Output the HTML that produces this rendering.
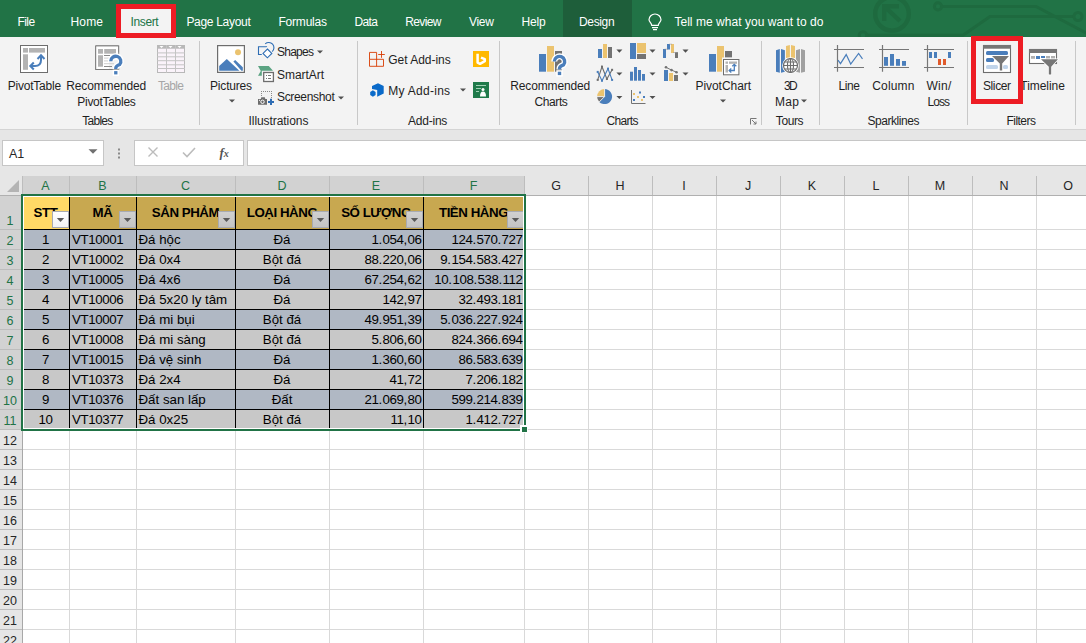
<!DOCTYPE html>
<html><head><meta charset="utf-8"><style>
html,body{margin:0;padding:0;}
body{width:1086px;height:643px;overflow:hidden;position:relative;background:#fff;font-family:"Liberation Sans",sans-serif;}
.t{position:absolute;white-space:nowrap;}
.r{position:absolute;}
.s{position:absolute;overflow:visible;}
</style></head><body>
<div class="r" style="left:0px;top:0px;width:1086px;height:37px;background:#217346;"></div>
<svg class="s" style="left:830px;top:0px" width="256" height="37" viewBox="0 0 256 37">
<g fill="none" stroke="#1e6a3f" stroke-width="3">
<circle cx="62" cy="13.8" r="16.8" stroke-width="4.4"/>
<path d="M52 6.2 H69 M54.2 4 V21 M55 7 L70 21" stroke-width="4.4"/>
<path d="M111 6.4 L206 6.4 L256 33"/>
<circle cx="108" cy="6.4" r="3.6"/>
<path d="M37 35.3 L133 35.3 L160 16.5 L244 16.5"/>
<circle cx="248" cy="16.5" r="4"/>
<circle cx="33" cy="35.5" r="3.8"/>
</g></svg>
<div class="r" style="left:563px;top:0px;width:69px;height:37px;background:#1e5e3a;"></div>
<div class="t" style="left:17.5px;top:16.04px;font-size:12px;line-height:12px;color:#ffffff;font-weight:normal;letter-spacing:-0.583px;">File</div>
<div class="t" style="left:70.5px;top:16.04px;font-size:12px;line-height:12px;color:#ffffff;font-weight:normal;letter-spacing:0.167px;">Home</div>
<div class="t" style="left:186.4px;top:16.04px;font-size:12px;line-height:12px;color:#ffffff;font-weight:normal;letter-spacing:-0.300px;">Page Layout</div>
<div class="t" style="left:278.5px;top:16.04px;font-size:12px;line-height:12px;color:#ffffff;font-weight:normal;letter-spacing:-0.214px;">Formulas</div>
<div class="t" style="left:354.6px;top:16.04px;font-size:12px;line-height:12px;color:#ffffff;font-weight:normal;letter-spacing:-0.700px;">Data</div>
<div class="t" style="left:405.2px;top:16.04px;font-size:12px;line-height:12px;color:#ffffff;font-weight:normal;letter-spacing:-0.600px;">Review</div>
<div class="t" style="left:469.0px;top:16.04px;font-size:12px;line-height:12px;color:#ffffff;font-weight:normal;letter-spacing:-0.333px;">View</div>
<div class="t" style="left:521.4px;top:16.04px;font-size:12px;line-height:12px;color:#ffffff;font-weight:normal;letter-spacing:-0.150px;">Help</div>
<div class="t" style="left:579.0px;top:16.04px;font-size:12px;line-height:12px;color:#ffffff;font-weight:normal;letter-spacing:-0.350px;">Design</div>
<div class="t" style="left:674.4px;top:16.04px;font-size:12px;line-height:12px;color:#ffffff;font-weight:normal;letter-spacing:0.037px;">Tell me what you want to do</div>
<svg class="s" style="left:646px;top:12px" width="18" height="20" viewBox="0 0 18 20"><g fill="none" stroke="#ffffff" stroke-width="1.2">
<path d="M5.7 13.3 C5.7 11 3 9.8 3 7.8 A6 5.8 0 0 1 15 7.8 C15 9.8 12.3 11 12.3 13.3 Z"/>
<path d="M6 15.6 H12 M7 17.6 H11"/></g></svg>
<div class="r" style="left:0px;top:37px;width:1086px;height:92px;background:#f3f3f3;"></div>
<div class="r" style="left:0px;top:129px;width:1086px;height:1px;background:#d4d4d4;"></div>
<div class="r" style="left:121px;top:9px;width:50px;height:30px;background:#f3f3f3;"></div>
<div class="t" style="left:130.4px;top:16.04px;font-size:12px;line-height:12px;color:#217346;font-weight:normal;letter-spacing:-0.340px;">Insert</div>
<div class="r" style="left:116px;top:4px;width:50px;height:24px;border:5px solid #ed1c24;"></div>
<div class="r" style="left:199px;top:41px;width:1px;height:84px;background:#c8c8c8;"></div>
<div class="r" style="left:357px;top:41px;width:1px;height:84px;background:#c8c8c8;"></div>
<div class="r" style="left:499px;top:41px;width:1px;height:84px;background:#c8c8c8;"></div>
<div class="r" style="left:761px;top:41px;width:1px;height:84px;background:#c8c8c8;"></div>
<div class="r" style="left:819px;top:41px;width:1px;height:84px;background:#c8c8c8;"></div>
<div class="r" style="left:967px;top:41px;width:1px;height:84px;background:#c8c8c8;"></div>
<div class="r" style="left:1075px;top:41px;width:1px;height:84px;background:#c8c8c8;"></div>
<div class="t" style="left:82.3px;top:114.84px;font-size:12px;line-height:12px;color:#1f1f1f;font-weight:normal;letter-spacing:-0.750px;">Tables</div>
<div class="t" style="left:248.5px;top:114.84px;font-size:12px;line-height:12px;color:#1f1f1f;font-weight:normal;letter-spacing:-0.062px;">Illustrations</div>
<div class="t" style="left:408.0px;top:114.84px;font-size:12px;line-height:12px;color:#1f1f1f;font-weight:normal;letter-spacing:-0.225px;">Add-ins</div>
<div class="t" style="left:606.4px;top:114.84px;font-size:12px;line-height:12px;color:#1f1f1f;font-weight:normal;letter-spacing:-0.670px;">Charts</div>
<div class="t" style="left:775.8px;top:114.84px;font-size:12px;line-height:12px;color:#1f1f1f;font-weight:normal;letter-spacing:-0.412px;">Tours</div>
<div class="t" style="left:867.5px;top:114.84px;font-size:12px;line-height:12px;color:#1f1f1f;font-weight:normal;letter-spacing:-0.456px;">Sparklines</div>
<div class="t" style="left:1006.6px;top:114.84px;font-size:12px;line-height:12px;color:#1f1f1f;font-weight:normal;letter-spacing:-0.558px;">Filters</div>
<div class="t" style="left:7.65px;top:79.84px;font-size:12px;line-height:12px;color:#1f1f1f;font-weight:normal;letter-spacing:-0.211px;">PivotTable</div>
<div class="t" style="left:66.3px;top:79.84px;font-size:12px;line-height:12px;color:#1f1f1f;font-weight:normal;letter-spacing:-0.140px;">Recommended</div>
<div class="t" style="left:77.3px;top:96.04px;font-size:12px;line-height:12px;color:#1f1f1f;font-weight:normal;letter-spacing:-0.290px;">PivotTables</div>
<div class="t" style="left:210.0px;top:79.84px;font-size:12px;line-height:12px;color:#1f1f1f;font-weight:normal;letter-spacing:-0.179px;">Pictures</div>
<div class="t" style="left:277.0px;top:46.04px;font-size:12px;line-height:12px;color:#1f1f1f;font-weight:normal;letter-spacing:-0.750px;">Shapes</div>
<div class="t" style="left:277.0px;top:68.74px;font-size:12px;line-height:12px;color:#1f1f1f;font-weight:normal;letter-spacing:-0.036px;">SmartArt</div>
<div class="t" style="left:277.0px;top:91.44px;font-size:12px;line-height:12px;color:#1f1f1f;font-weight:normal;letter-spacing:-0.328px;">Screenshot</div>
<div class="t" style="left:388.3px;top:54.24px;font-size:12px;line-height:12px;color:#1f1f1f;font-weight:normal;letter-spacing:-0.025px;">Get Add-ins</div>
<div class="t" style="left:388.3px;top:84.94px;font-size:12px;line-height:12px;color:#1f1f1f;font-weight:normal;letter-spacing:0.272px;">My Add-ins</div>
<div class="t" style="left:510.3px;top:79.84px;font-size:12px;line-height:12px;color:#1f1f1f;font-weight:normal;letter-spacing:-0.140px;">Recommended</div>
<div class="t" style="left:534.6px;top:96.04px;font-size:12px;line-height:12px;color:#1f1f1f;font-weight:normal;letter-spacing:-0.430px;">Charts</div>
<div class="t" style="left:695.5px;top:79.84px;font-size:12px;line-height:12px;color:#1f1f1f;font-weight:normal;letter-spacing:-0.056px;">PivotChart</div>
<div class="t" style="left:784.0px;top:79.84px;font-size:12px;line-height:12px;color:#1f1f1f;font-weight:normal;letter-spacing:-1.550px;">3D</div>
<div class="t" style="left:775.0px;top:96.04px;font-size:12px;line-height:12px;color:#1f1f1f;font-weight:normal;letter-spacing:0.275px;">Map</div>
<div class="t" style="left:838.4px;top:79.84px;font-size:12px;line-height:12px;color:#1f1f1f;font-weight:normal;letter-spacing:-0.383px;">Line</div>
<div class="t" style="left:872.3px;top:79.84px;font-size:12px;line-height:12px;color:#1f1f1f;font-weight:normal;letter-spacing:0.150px;">Column</div>
<div class="t" style="left:926.4px;top:79.84px;font-size:12px;line-height:12px;color:#1f1f1f;font-weight:normal;letter-spacing:0.317px;">Win/</div>
<div class="t" style="left:927.5px;top:96.04px;font-size:12px;line-height:12px;color:#1f1f1f;font-weight:normal;letter-spacing:-0.983px;">Loss</div>
<div class="t" style="left:983.0px;top:79.84px;font-size:12px;line-height:12px;color:#1f1f1f;font-weight:normal;letter-spacing:-0.400px;">Slicer</div>
<div class="t" style="left:1020.3px;top:79.84px;font-size:12px;line-height:12px;color:#1f1f1f;font-weight:normal;letter-spacing:-0.043px;">Timeline</div>
<div class="t" style="left:158.0px;top:79.84px;font-size:12px;line-height:12px;color:#a6a6a6;font-weight:normal;letter-spacing:-0.688px;">Table</div>
<svg class="s" style="left:20px;top:45px" width="28" height="28" viewBox="0 0 28 28"><rect x="0.5" y="0.5" width="27" height="27" fill="#fff" stroke="#6d6d6d"/>
<rect x="3" y="3" width="5" height="4.6" fill="#b3b3b3"/><rect x="9" y="3" width="16" height="4.6" fill="#b3b3b3"/>
<rect x="3" y="9.3" width="5" height="15.5" fill="#b3b3b3"/>
<g fill="none" stroke="#4a7ebb" stroke-width="2"><path d="M10.5 21 L15 21 Q21 21 21 15 L21 10.5"/>
<path d="M13.8 17.5 L10.3 21 L13.8 24.5"/><path d="M17.5 14 L21 10.3 L24.5 14"/></g></svg>
<svg class="s" style="left:88px;top:40px" width="40" height="40" viewBox="0 0 40 40"><path d="M7.7 29.5 V6 H30.5 V12" fill="none" stroke="#7a7a7a" stroke-width="1"/>
<path d="M7.7 6 H30.5 V20 H21 V29.5 H7.7 Z" fill="#fff"/>
<rect x="7.7" y="5.9" width="23" height="23.6" fill="none" stroke="#7a7a7a"/>
<rect x="10" y="9" width="5" height="4.7" fill="#b3b3b3"/><rect x="16.2" y="9" width="11.8" height="4.7" fill="#b3b3b3"/>
<rect x="10" y="15.2" width="5" height="11.5" fill="#b3b3b3"/>
<rect x="16" y="15" width="6" height="1" fill="#8a8a8a"/><rect x="16" y="17.6" width="8" height="1" fill="#cfcfcf"/>
<rect x="16" y="20.4" width="4" height="1" fill="#cfcfcf"/><rect x="16" y="23.2" width="10" height="1" fill="#cfcfcf"/>
<rect x="16" y="26" width="8" height="1" fill="#8a8a8a"/>
<g transform="translate(21,15.3) scale(0.97)"><path d="M1.8 6.2 A5.2 5.2 0 1 1 11 9.5 Q7 11 7 13.2 V14" fill="none" stroke="#fff" stroke-width="6"/><rect x="3.8" y="14.8" width="6.4" height="6.4" fill="#fff"/><path d="M1.8 6.2 A5.2 5.2 0 1 1 11 9.5 Q7 11 7 13.2 V14" fill="none" stroke="#4a7ebb" stroke-width="3.4"/><rect x="5.3" y="16.3" width="3.4" height="3.4" fill="#4a7ebb"/></g></svg>
<svg class="s" style="left:157px;top:45px" width="28" height="28" viewBox="0 0 28 28"><rect x="0" y="0" width="28" height="28" fill="#b8b8b8"/><rect x="1" y="3.7" width="26" height="23.3" fill="#faf3fa"/><rect x="0" y="7.4" width="28" height="1" fill="#c4c4c4"/><rect x="0" y="11.3" width="28" height="1" fill="#c4c4c4"/><rect x="0" y="15.2" width="28" height="1" fill="#c4c4c4"/><rect x="0" y="19.3" width="28" height="1" fill="#c4c4c4"/><rect x="0" y="23" width="28" height="1" fill="#c4c4c4"/><rect x="9" y="0" width="1" height="28" fill="#c4c4c4"/><rect x="18" y="0" width="1" height="28" fill="#c4c4c4"/><path d="M2.5 1 L6.5 1 L4.5 3 Z" fill="#fff"/><path d="M11.5 1 L15.5 1 L13.5 3 Z" fill="#fff"/><path d="M20.5 1 L24.5 1 L22.5 3 Z" fill="#fff"/></svg>
<svg class="s" style="left:217px;top:45px" width="28" height="28" viewBox="0 0 28 28"><rect x="0.6" y="0.6" width="26.8" height="26.8" fill="#fff" stroke="#6d6d6d" stroke-width="1.2"/>
<circle cx="21" cy="7.2" r="3" fill="#ebc36f"/>
<path d="M2.2 21 L9.8 14 L22.4 25.8 L2.2 25.8 Z" fill="#4a7ebb"/>
<path d="M16.4 16.6 L18.2 15 L25.8 22.2 L25.8 25.8 L24.4 25.8 Z" fill="#4a7ebb"/></svg>
<svg class="s" style="left:254px;top:40px" width="24" height="24" viewBox="0 0 24 24"><g fill="none" stroke="#2e6db4" stroke-width="1.1">
<path d="M12.5 7 V6.7 H4.5 V14.5 H7.8"/>
<path d="M11.2 3.8 A5 5 0 0 1 18.2 11.6"/>
<path d="M13.4 9 L17.8 13.4 L13.4 17.8 L9 13.4 Z" fill="#fff"/></g></svg>
<svg class="s" style="left:254px;top:62px" width="24" height="24" viewBox="0 0 24 24"><path d="M4 4 H14.8 L19 8.7 H7.8 V13.8 H4 L6.8 8.9 Z" fill="#5ba382"/>
<rect x="9.7" y="10.5" width="9.7" height="9" fill="#fff" stroke="#6d6d6d" stroke-width="1.3"/>
<rect x="12" y="13" width="1" height="1" fill="#777"/><rect x="14" y="13" width="3" height="1" fill="#777"/>
<rect x="12" y="16" width="1" height="1" fill="#777"/><rect x="14" y="16" width="3" height="1" fill="#777"/></svg>
<svg class="s" style="left:254px;top:86px" width="24" height="24" viewBox="0 0 24 24"><rect x="7" y="5" width="1" height="1" fill="#8a8a8a"/><rect x="9" y="5" width="1" height="1" fill="#8a8a8a"/><rect x="11" y="5" width="1" height="1" fill="#8a8a8a"/><rect x="13" y="5" width="1" height="1" fill="#8a8a8a"/><rect x="15" y="5" width="1" height="1" fill="#8a8a8a"/><rect x="17" y="5" width="1" height="1" fill="#8a8a8a"/><rect x="7" y="7" width="1" height="1" fill="#8a8a8a"/><rect x="17" y="7" width="1" height="1" fill="#8a8a8a"/><rect x="7" y="9" width="1" height="1" fill="#8a8a8a"/><rect x="17" y="9" width="1" height="1" fill="#8a8a8a"/><rect x="17" y="11" width="1" height="1" fill="#8a8a8a"/><path d="M4 13 H6.8 L7.3 11.2 H10.8 L11.3 13 H13 V18.8 H4 Z" fill="#6d6d6d"/>
<circle cx="8.5" cy="15.8" r="1.7" fill="none" stroke="#fff" stroke-width="1"/><rect x="5" y="13.8" width="1" height="1" fill="#fff"/>
<path d="M17 12.8 V19 M14 15.9 H20" stroke="#2e6db4" stroke-width="2"/></svg>
<svg class="s" style="left:366px;top:46px" width="24" height="24" viewBox="0 0 24 24"><g fill="none" stroke="#d83b01" stroke-width="0.9">
<path d="M3.5 13.3 V6.4 H10.6 V20.3 M3.5 13.3 H17.5 V20.3 H3.5 Z"/>
<path d="M12.2 8.5 H18.8 M15.5 5 V11.8"/></g></svg>
<svg class="s" style="left:366px;top:78px" width="24" height="24" viewBox="0 0 24 24"><path d="M6 8 L12 5.2 L17.7 8 V15.5 L11.2 18.7 V12 L6 11 Z" fill="#0a6ac9"/>
<path d="M6.9 12.3 L9.6 13.9 V17.1 L6.9 18.7 L4.2 17.1 V13.9 Z" fill="#0a6ac9"/></svg>
<svg class="s" style="left:473px;top:51px" width="16" height="16" viewBox="0 0 16 16"><rect width="16" height="16" fill="#ffb900"/>
<path d="M4.6 2.8 V11.6 L7 12.8 L11.8 10.1 L11.8 8.2 L8 6.6" fill="none" stroke="#fff" stroke-width="2.5" stroke-linejoin="round"/></svg>
<svg class="s" style="left:473px;top:82px" width="16" height="16" viewBox="0 0 16 16"><rect width="16" height="16" fill="#1f7a4a"/>
<rect x="3" y="3" width="10" height="1" fill="#9fd0b4"/><rect x="3" y="6" width="5" height="1" fill="#9fd0b4"/><rect x="3" y="9" width="3" height="1" fill="#9fd0b4"/>
<circle cx="10" cy="7.5" r="1.5" fill="#fff"/><path d="M7 14.5 Q7 9.5 10 9.5 Q13 9.5 13 14.5 Z" fill="#fff"/></svg>
<svg class="s" style="left:534px;top:42px" width="36" height="36" viewBox="0 0 36 36"><rect x="5" y="12" width="7" height="17.7" fill="#4a7ebb"/>
<rect x="13" y="4" width="7" height="25.7" fill="#ebc36f"/>
<rect x="21" y="9" width="7" height="20.7" fill="#737373"/><g transform="translate(18.5,13.4) scale(1.0)"><path d="M1.8 6.2 A5.2 5.2 0 1 1 11 9.5 Q7 11 7 13.2 V14" fill="none" stroke="#fff" stroke-width="6"/><rect x="3.8" y="14.8" width="6.4" height="6.4" fill="#fff"/><path d="M1.8 6.2 A5.2 5.2 0 1 1 11 9.5 Q7 11 7 13.2 V14" fill="none" stroke="#4a7ebb" stroke-width="3.4"/><rect x="5.3" y="16.3" width="3.4" height="3.4" fill="#4a7ebb"/></g></svg>
<svg class="s" style="left:594px;top:40px" width="100" height="68" viewBox="0 0 100 68">
<rect x="4" y="9" width="4" height="9" fill="#4a7ebb"/><rect x="9" y="4" width="4" height="14" fill="#ebc36f"/><rect x="14" y="7" width="4" height="11" fill="#737373"/>
<rect x="36" y="3" width="6" height="16" fill="#4a7ebb"/><rect x="43" y="3" width="9" height="10" fill="#ebc36f"/><rect x="43" y="14" width="9" height="5" fill="#737373"/>
<rect x="69" y="9" width="3" height="9" fill="#4a7ebb"/><rect x="73" y="4" width="3" height="5.5" fill="#4a7ebb"/><rect x="77" y="4" width="3" height="9" fill="#ebc36f"/><rect x="81" y="12.2" width="3" height="5.8" fill="#737373"/>
<path d="M70.5 9.2 H74 M75 4.2 H78 M79 12.5 H82" stroke="#999" stroke-width="0.6"/>
<g fill="none" stroke-width="1.1"><path d="M3.7 39.9 L8 26.7 L12.9 39 L18.1 29.8" stroke="#6d6d6d"/><path d="M3.7 31.9 L8 40.7 L14 28.7 L18.1 39.9" stroke="#4a7ebb"/></g>
<rect x="2.7" y="38.9" width="2" height="2" fill="#6d6d6d"/><rect x="7" y="25.7" width="2" height="2" fill="#6d6d6d"/><rect x="11.9" y="38" width="2" height="2" fill="#6d6d6d"/><rect x="17.1" y="28.8" width="2" height="2" fill="#6d6d6d"/>
<rect x="2.7" y="30.9" width="2" height="2" fill="#4a7ebb"/><rect x="7" y="39.7" width="2" height="2" fill="#4a7ebb"/><rect x="13" y="27.7" width="2" height="2" fill="#4a7ebb"/><rect x="17.1" y="38.9" width="2" height="2" fill="#4a7ebb"/>
<rect x="36" y="31.7" width="3" height="9" fill="#4a7ebb"/><rect x="40" y="27" width="3" height="13.7" fill="#4a7ebb"/><rect x="44" y="30" width="3" height="10.7" fill="#4a7ebb"/><rect x="48" y="34" width="3" height="6.7" fill="#4a7ebb"/>
<rect x="70" y="30" width="4" height="11" fill="#4a7ebb"/><rect x="75" y="33" width="4" height="8" fill="#ebc36f"/><rect x="80" y="35" width="4" height="6" fill="#737373"/>
<path d="M72 27.3 L77.5 30.1 L82.5 32.2" fill="none" stroke="#737373" stroke-width="1"/>
<circle cx="72" cy="27.3" r="1.3" fill="#737373"/><circle cx="77.5" cy="30.1" r="1.3" fill="#737373"/><circle cx="82.5" cy="32.2" r="1.3" fill="#737373"/>
<path d="M10.6 56.6 L10.6 49.1 A7.5 7.5 0 1 1 5.3 61.9 Z" fill="#4a7ebb"/>
<path d="M10.6 56.6 L3.1 56.6 A7.5 7.5 0 0 1 10.6 49.1 Z" fill="#ebc36f"/>
<path d="M10.6 56.6 L5.3 61.9 A7.5 7.5 0 0 1 3.1 56.6 Z" fill="#737373"/>
<path d="M10.6 48.5 V56.6 H2.5 M10.6 56.6 L4.9 62.3" stroke="#f3f3f3" stroke-width="0.9" fill="none"/>
<path d="M37.5 50 V63.5 H51.5" fill="none" stroke="#737373" stroke-width="1"/>
<rect x="39" y="53" width="2" height="2" fill="#ebc36f"/><rect x="45" y="51.5" width="2" height="2" fill="#4a7ebb"/><rect x="43" y="56" width="2" height="2" fill="#ebc36f"/>
<rect x="49" y="56" width="2" height="2" fill="#4a7ebb"/><rect x="39" y="59" width="2" height="2" fill="#4a7ebb"/><rect x="47" y="59" width="2" height="2" fill="#ebc36f"/>
<path d="M22.4 9.6 L28.4 9.6 L25.4 12.7 Z" fill="#505050"/><path d="M55.5 9.6 L61.5 9.6 L58.5 12.7 Z" fill="#505050"/><path d="M88.5 9.6 L94.5 9.6 L91.5 12.7 Z" fill="#505050"/><path d="M22.4 32.5 L28.4 32.5 L25.4 35.6 Z" fill="#505050"/><path d="M55.5 32.5 L61.5 32.5 L58.5 35.6 Z" fill="#505050"/><path d="M88.5 32.5 L94.5 32.5 L91.5 35.6 Z" fill="#505050"/><path d="M22.4 55.9 L28.4 55.9 L25.4 59.0 Z" fill="#505050"/><path d="M55.5 55.9 L61.5 55.9 L58.5 59.0 Z" fill="#505050"/></svg>
<svg class="s" style="left:705px;top:42px" width="36" height="36" viewBox="0 0 36 36"><rect x="4" y="12" width="7" height="17.7" fill="#4a7ebb"/>
<rect x="12" y="4" width="7" height="25.7" fill="#ebc36f"/>
<rect x="20" y="9" width="7" height="6.7" fill="#737373"/>
<rect x="17" y="15.5" width="19" height="18" fill="#f3f3f3"/>
<rect x="18.5" y="17.5" width="15.4" height="15.3" fill="#fff" stroke="#6d6d6d" stroke-width="1"/>
<rect x="20.5" y="19.5" width="2.5" height="2.3" fill="#b3b3b3"/><rect x="24" y="19.5" width="8" height="2.3" fill="#b3b3b3"/>
<rect x="20.5" y="23" width="2.5" height="7.5" fill="#b3b3b3"/>
<g fill="none" stroke="#4a7ebb" stroke-width="1.3"><path d="M24.2 28.5 H29.3 V22.5"/><path d="M26.3 26.6 L24.2 28.5 L26.3 30.5 M27.3 24.3 L29.3 22.3 L31.3 24.3"/></g></svg>
<svg class="s" style="left:772px;top:42px" width="36" height="36" viewBox="0 0 36 36"><path d="M4 8.3 L7.8 7 V30.8 L4 29.8 Z" fill="#4a7ebb"/><path d="M9 7 L12.9 8.3 V29.8 L9 30.8 Z" fill="#4a7ebb"/>
<path d="M14 4 L17.9 3 V16 H14 Z" fill="#ebc36f"/><path d="M19 3 L23 4 V16 H19 Z" fill="#ebc36f"/>
<path d="M24 8.3 L28 7 V30.8 L24 29.8 Z" fill="#a0a0a0"/><path d="M29 7 L33 8.3 V29.8 L29 30.8 Z" fill="#a0a0a0"/>
<circle cx="18.5" cy="23.5" r="8.3" fill="#fff"/>
<g fill="none" stroke="#6d6d6d" stroke-width="1.2"><circle cx="18.5" cy="23.5" r="7"/><ellipse cx="18.5" cy="23.5" rx="3" ry="7"/>
<path d="M11.5 23.5 H25.5 M12.5 20 H24.5 M12.5 27 H24.5 M18.5 16.5 V30.5"/></g></svg>
<svg class="s" style="left:830px;top:42px" width="36" height="36" viewBox="0 0 36 36"><path d="M7.5 3 V29.7 M4 7.5 H34 M4 25.5 H34" fill="none" stroke="#767676" stroke-width="1.2"/></svg>
<svg class="s" style="left:876px;top:42px" width="36" height="36" viewBox="0 0 36 36"><path d="M6.5 3 V29.7 M3 7.5 H33 M3 25.5 H33" fill="none" stroke="#767676" stroke-width="1.2"/></svg>
<svg class="s" style="left:921px;top:42px" width="36" height="36" viewBox="0 0 36 36"><path d="M6.5 3 V29.7 M3 7.5 H33 M3 25.5 H33" fill="none" stroke="#767676" stroke-width="1.2"/></svg>
<svg class="s" style="left:830px;top:42px" width="36" height="36" viewBox="0 0 36 36"><path d="M8 18.2 L10.5 21.6 L16.2 12.6 L20.7 22.1 L28.6 11.5 L32.5 16.8" fill="none" stroke="#4a7ebb" stroke-width="1.2"/></svg>
<svg class="s" style="left:876px;top:42px" width="36" height="36" viewBox="0 0 36 36"><rect x="8" y="15" width="4" height="8.8" fill="#4a7ebb"/><rect x="14" y="12" width="4" height="11.8" fill="#4a7ebb"/><rect x="20" y="17" width="4" height="6.8" fill="#4a7ebb"/><rect x="26" y="19" width="4" height="4.8" fill="#4a7ebb"/></svg>
<svg class="s" style="left:921px;top:42px" width="36" height="36" viewBox="0 0 36 36"><rect x="8" y="10" width="3" height="6" fill="#4a7ebb"/><rect x="13" y="10" width="3" height="6" fill="#4a7ebb"/><rect x="27" y="10" width="3" height="6" fill="#4a7ebb"/><rect x="17" y="17" width="3" height="6" fill="#e05a2b"/><rect x="22" y="17" width="3" height="6" fill="#e05a2b"/></svg>
<svg class="s" style="left:978px;top:40px" width="40" height="40" viewBox="0 0 40 40"><rect x="5.5" y="5.5" width="27" height="27" fill="#fff" stroke="#6d6d6d" stroke-width="1.1"/>
<rect x="5" y="5" width="28" height="3.7" fill="#767676"/>
<rect x="8" y="11" width="22" height="4" rx="1.5" fill="#4a7ebb"/><rect x="8" y="18" width="8" height="4" rx="1.5" fill="#4a7ebb"/>
<rect x="8" y="25" width="12" height="4" rx="1.5" fill="#c0d4ea"/><rect x="25" y="25" width="5" height="4" rx="1.5" fill="#c0d4ea"/>
<path d="M14 16 H31 L24.2 23.5 V30.5 H21.8 V23.5 Z" fill="#767676" stroke="#fff" stroke-width="1.6" paint-order="stroke" stroke-linejoin="round"/></svg>
<svg class="s" style="left:1024px;top:40px" width="40" height="40" viewBox="0 0 40 40"><rect x="5.5" y="9.5" width="27" height="14" fill="#fff" stroke="#6d6d6d" stroke-width="1.1"/>
<rect x="5" y="9" width="28" height="4" fill="#767676"/>
<rect x="7" y="16" width="4" height="2.8" fill="#b0b0b0"/><rect x="12" y="16" width="4" height="3" fill="#4a7ebb"/><rect x="17" y="16" width="4" height="2" fill="#4a7ebb"/>
<rect x="22" y="16" width="4" height="2.8" fill="#b0b0b0"/><rect x="27" y="16" width="4" height="2.8" fill="#b0b0b0"/>
<path d="M17 19.3 H34 L27.2 26.7 V34.5 H24.8 V26.7 Z" fill="#767676" stroke="#fff" stroke-width="1.6" paint-order="stroke" stroke-linejoin="round"/></svg>
<svg class="s" style="left:227.5px;top:98px" width="8" height="6" viewBox="0 0 8 6"><path d="M1 1.5 L7 1.5 L4 4.6 Z" fill="#505050"/></svg>
<svg class="s" style="left:315.5px;top:48.6px" width="8" height="6" viewBox="0 0 8 6"><path d="M1 1.5 L7 1.5 L4 4.6 Z" fill="#505050"/></svg>
<svg class="s" style="left:336.6px;top:94.5px" width="8" height="6" viewBox="0 0 8 6"><path d="M1 1.5 L7 1.5 L4 4.6 Z" fill="#505050"/></svg>
<svg class="s" style="left:458.5px;top:87.4px" width="8" height="6" viewBox="0 0 8 6"><path d="M1 1.5 L7 1.5 L4 4.6 Z" fill="#505050"/></svg>
<svg class="s" style="left:719.3px;top:97.8px" width="8" height="6" viewBox="0 0 8 6"><path d="M1 1.5 L7 1.5 L4 4.6 Z" fill="#505050"/></svg>
<svg class="s" style="left:800.3px;top:97.8px" width="8" height="6" viewBox="0 0 8 6"><path d="M1 1.5 L7 1.5 L4 4.6 Z" fill="#505050"/></svg>
<svg class="s" style="left:750px;top:118px" width="8" height="7" viewBox="0 0 8 7"><path d="M0.5 6.5 V0.5 H6.5" fill="none" stroke="#777" stroke-width="1"/><path d="M2 2 L6 6 M6 3.5 V6 H3.5" fill="none" stroke="#777" stroke-width="1"/></svg>
<div class="r" style="left:971px;top:36px;width:42px;height:58px;border:5px solid #ed1c24;"></div>
<div class="r" style="left:0px;top:130px;width:1086px;height:46px;background:#e6e6e6;"></div>
<div class="r" style="left:2px;top:140px;width:100px;height:24px;background:#fff;border:1px solid #c6c6c6;"></div>
<div class="t" style="left:9px;top:147.92px;font-size:12.5px;line-height:12.5px;color:#262626;font-weight:normal;">A1</div>
<div class="r" style="left:134px;top:140px;width:108px;height:24px;background:#fff;border:1px solid #c6c6c6;"></div>
<div class="r" style="left:247px;top:140px;width:850px;height:24px;background:#fff;border:1px solid #c6c6c6;"></div>
<svg class="s" style="left:112px;top:145px" width="14" height="16" viewBox="0 0 14 16"><rect x="6" y="3.5" width="2" height="2" fill="#8a8a8a"/><rect x="6" y="7.5" width="2" height="2" fill="#8a8a8a"/><rect x="6" y="11.5" width="2" height="2" fill="#8a8a8a"/></svg>
<svg class="s" style="left:87px;top:147px" width="12" height="10" viewBox="0 0 12 10"><path d="M1.5 2.3 L10.5 2.3 L6 6.8 Z" fill="#707070"/></svg>
<svg class="s" style="left:146px;top:145px" width="14" height="14" viewBox="0 0 14 14"><path d="M2.5 2.5 L11.5 11.5 M11.5 2.5 L2.5 11.5" stroke="#bcbcbc" stroke-width="1.4"/></svg>
<svg class="s" style="left:181px;top:145px" width="16" height="14" viewBox="0 0 16 14"><path d="M2 7.5 L6 11.5 L14 3" fill="none" stroke="#bcbcbc" stroke-width="1.6"/></svg>
<div class="t" style="left:219.5px;top:146.00px;font-size:13px;line-height:13px;color:#555;font-weight:bold;font-family:\"Liberation Serif\",serif;"><i>f</i><span style="font-size:10px"><i>x</i></span></div>
<div class="r" style="left:0px;top:176px;width:1086px;height:19px;background:#e6e6e6;"></div>
<div class="r" style="left:22px;top:176px;width:502px;height:19px;background:#d2d2d2;"></div>
<div class="r" style="left:0px;top:195px;width:22px;height:448px;background:#e6e6e6;"></div>
<div class="r" style="left:0px;top:195px;width:22px;height:234px;background:#d2d2d2;"></div>
<div class="r" style="left:22px;top:195px;width:1064px;height:448px;background:#ffffff;"></div>
<div class="r" style="left:69px;top:195px;width:1px;height:448px;background:#d9d9d9;"></div>
<div class="r" style="left:136px;top:195px;width:1px;height:448px;background:#d9d9d9;"></div>
<div class="r" style="left:235px;top:195px;width:1px;height:448px;background:#d9d9d9;"></div>
<div class="r" style="left:329px;top:195px;width:1px;height:448px;background:#d9d9d9;"></div>
<div class="r" style="left:423px;top:195px;width:1px;height:448px;background:#d9d9d9;"></div>
<div class="r" style="left:524px;top:195px;width:1px;height:448px;background:#d9d9d9;"></div>
<div class="r" style="left:588px;top:195px;width:1px;height:448px;background:#d9d9d9;"></div>
<div class="r" style="left:652px;top:195px;width:1px;height:448px;background:#d9d9d9;"></div>
<div class="r" style="left:716px;top:195px;width:1px;height:448px;background:#d9d9d9;"></div>
<div class="r" style="left:780px;top:195px;width:1px;height:448px;background:#d9d9d9;"></div>
<div class="r" style="left:844px;top:195px;width:1px;height:448px;background:#d9d9d9;"></div>
<div class="r" style="left:908px;top:195px;width:1px;height:448px;background:#d9d9d9;"></div>
<div class="r" style="left:972px;top:195px;width:1px;height:448px;background:#d9d9d9;"></div>
<div class="r" style="left:1036px;top:195px;width:1px;height:448px;background:#d9d9d9;"></div>
<div class="r" style="left:22px;top:229px;width:1064px;height:1px;background:#d9d9d9;"></div>
<div class="r" style="left:22px;top:249px;width:1064px;height:1px;background:#d9d9d9;"></div>
<div class="r" style="left:22px;top:269px;width:1064px;height:1px;background:#d9d9d9;"></div>
<div class="r" style="left:22px;top:289px;width:1064px;height:1px;background:#d9d9d9;"></div>
<div class="r" style="left:22px;top:309px;width:1064px;height:1px;background:#d9d9d9;"></div>
<div class="r" style="left:22px;top:329px;width:1064px;height:1px;background:#d9d9d9;"></div>
<div class="r" style="left:22px;top:349px;width:1064px;height:1px;background:#d9d9d9;"></div>
<div class="r" style="left:22px;top:369px;width:1064px;height:1px;background:#d9d9d9;"></div>
<div class="r" style="left:22px;top:389px;width:1064px;height:1px;background:#d9d9d9;"></div>
<div class="r" style="left:22px;top:409px;width:1064px;height:1px;background:#d9d9d9;"></div>
<div class="r" style="left:22px;top:429px;width:1064px;height:1px;background:#d9d9d9;"></div>
<div class="r" style="left:22px;top:449px;width:1064px;height:1px;background:#d9d9d9;"></div>
<div class="r" style="left:22px;top:469px;width:1064px;height:1px;background:#d9d9d9;"></div>
<div class="r" style="left:22px;top:489px;width:1064px;height:1px;background:#d9d9d9;"></div>
<div class="r" style="left:22px;top:509px;width:1064px;height:1px;background:#d9d9d9;"></div>
<div class="r" style="left:22px;top:529px;width:1064px;height:1px;background:#d9d9d9;"></div>
<div class="r" style="left:22px;top:549px;width:1064px;height:1px;background:#d9d9d9;"></div>
<div class="r" style="left:22px;top:569px;width:1064px;height:1px;background:#d9d9d9;"></div>
<div class="r" style="left:22px;top:589px;width:1064px;height:1px;background:#d9d9d9;"></div>
<div class="r" style="left:22px;top:609px;width:1064px;height:1px;background:#d9d9d9;"></div>
<div class="r" style="left:22px;top:629px;width:1064px;height:1px;background:#d9d9d9;"></div>
<div class="r" style="left:22px;top:649px;width:1064px;height:1px;background:#d9d9d9;"></div>
<div class="r" style="left:69px;top:176px;width:1px;height:19px;background:#bdbdbd;"></div>
<div class="r" style="left:136px;top:176px;width:1px;height:19px;background:#bdbdbd;"></div>
<div class="r" style="left:235px;top:176px;width:1px;height:19px;background:#bdbdbd;"></div>
<div class="r" style="left:329px;top:176px;width:1px;height:19px;background:#bdbdbd;"></div>
<div class="r" style="left:423px;top:176px;width:1px;height:19px;background:#bdbdbd;"></div>
<div class="r" style="left:524px;top:176px;width:1px;height:19px;background:#bdbdbd;"></div>
<div class="r" style="left:588px;top:176px;width:1px;height:19px;background:#bdbdbd;"></div>
<div class="r" style="left:652px;top:176px;width:1px;height:19px;background:#bdbdbd;"></div>
<div class="r" style="left:716px;top:176px;width:1px;height:19px;background:#bdbdbd;"></div>
<div class="r" style="left:780px;top:176px;width:1px;height:19px;background:#bdbdbd;"></div>
<div class="r" style="left:844px;top:176px;width:1px;height:19px;background:#bdbdbd;"></div>
<div class="r" style="left:908px;top:176px;width:1px;height:19px;background:#bdbdbd;"></div>
<div class="r" style="left:972px;top:176px;width:1px;height:19px;background:#bdbdbd;"></div>
<div class="r" style="left:1036px;top:176px;width:1px;height:19px;background:#bdbdbd;"></div>
<div class="r" style="left:22px;top:176px;width:1px;height:19px;background:#bdbdbd;"></div>
<div class="r" style="left:0px;top:195px;width:1086px;height:1px;background:#b0b0b0;"></div>
<div class="r" style="left:22px;top:195px;width:1px;height:448px;background:#a8a8a8;"></div>
<div class="r" style="left:0px;top:229px;width:22px;height:1px;background:#bdbdbd;"></div>
<div class="r" style="left:0px;top:249px;width:22px;height:1px;background:#bdbdbd;"></div>
<div class="r" style="left:0px;top:269px;width:22px;height:1px;background:#bdbdbd;"></div>
<div class="r" style="left:0px;top:289px;width:22px;height:1px;background:#bdbdbd;"></div>
<div class="r" style="left:0px;top:309px;width:22px;height:1px;background:#bdbdbd;"></div>
<div class="r" style="left:0px;top:329px;width:22px;height:1px;background:#bdbdbd;"></div>
<div class="r" style="left:0px;top:349px;width:22px;height:1px;background:#bdbdbd;"></div>
<div class="r" style="left:0px;top:369px;width:22px;height:1px;background:#bdbdbd;"></div>
<div class="r" style="left:0px;top:389px;width:22px;height:1px;background:#bdbdbd;"></div>
<div class="r" style="left:0px;top:409px;width:22px;height:1px;background:#bdbdbd;"></div>
<div class="r" style="left:0px;top:429px;width:22px;height:1px;background:#bdbdbd;"></div>
<div class="r" style="left:0px;top:449px;width:22px;height:1px;background:#bdbdbd;"></div>
<div class="r" style="left:0px;top:469px;width:22px;height:1px;background:#bdbdbd;"></div>
<div class="r" style="left:0px;top:489px;width:22px;height:1px;background:#bdbdbd;"></div>
<div class="r" style="left:0px;top:509px;width:22px;height:1px;background:#bdbdbd;"></div>
<div class="r" style="left:0px;top:529px;width:22px;height:1px;background:#bdbdbd;"></div>
<div class="r" style="left:0px;top:549px;width:22px;height:1px;background:#bdbdbd;"></div>
<div class="r" style="left:0px;top:569px;width:22px;height:1px;background:#bdbdbd;"></div>
<div class="r" style="left:0px;top:589px;width:22px;height:1px;background:#bdbdbd;"></div>
<div class="r" style="left:0px;top:609px;width:22px;height:1px;background:#bdbdbd;"></div>
<div class="r" style="left:0px;top:629px;width:22px;height:1px;background:#bdbdbd;"></div>
<div class="r" style="left:0px;top:649px;width:22px;height:1px;background:#bdbdbd;"></div>
<div class="t" style="left:15.5px;width:60px;text-align:center;top:180.42px;font-size:12.5px;line-height:12.5px;color:#217346;font-weight:normal;">A</div>
<div class="t" style="left:72.5px;width:60px;text-align:center;top:180.42px;font-size:12.5px;line-height:12.5px;color:#217346;font-weight:normal;">B</div>
<div class="t" style="left:155.5px;width:60px;text-align:center;top:180.42px;font-size:12.5px;line-height:12.5px;color:#217346;font-weight:normal;">C</div>
<div class="t" style="left:252.0px;width:60px;text-align:center;top:180.42px;font-size:12.5px;line-height:12.5px;color:#217346;font-weight:normal;">D</div>
<div class="t" style="left:346.0px;width:60px;text-align:center;top:180.42px;font-size:12.5px;line-height:12.5px;color:#217346;font-weight:normal;">E</div>
<div class="t" style="left:443.5px;width:60px;text-align:center;top:180.42px;font-size:12.5px;line-height:12.5px;color:#217346;font-weight:normal;">F</div>
<div class="t" style="left:526.0px;width:60px;text-align:center;top:180.42px;font-size:12.5px;line-height:12.5px;color:#262626;font-weight:normal;">G</div>
<div class="t" style="left:590.0px;width:60px;text-align:center;top:180.42px;font-size:12.5px;line-height:12.5px;color:#262626;font-weight:normal;">H</div>
<div class="t" style="left:654.0px;width:60px;text-align:center;top:180.42px;font-size:12.5px;line-height:12.5px;color:#262626;font-weight:normal;">I</div>
<div class="t" style="left:718.0px;width:60px;text-align:center;top:180.42px;font-size:12.5px;line-height:12.5px;color:#262626;font-weight:normal;">J</div>
<div class="t" style="left:782.0px;width:60px;text-align:center;top:180.42px;font-size:12.5px;line-height:12.5px;color:#262626;font-weight:normal;">K</div>
<div class="t" style="left:846.0px;width:60px;text-align:center;top:180.42px;font-size:12.5px;line-height:12.5px;color:#262626;font-weight:normal;">L</div>
<div class="t" style="left:910.0px;width:60px;text-align:center;top:180.42px;font-size:12.5px;line-height:12.5px;color:#262626;font-weight:normal;">M</div>
<div class="t" style="left:974.0px;width:60px;text-align:center;top:180.42px;font-size:12.5px;line-height:12.5px;color:#262626;font-weight:normal;">N</div>
<div class="t" style="left:1038.0px;width:60px;text-align:center;top:180.42px;font-size:12.5px;line-height:12.5px;color:#262626;font-weight:normal;">O</div>
<div class="t" style="left:-1.0px;width:22px;text-align:center;top:215.42px;font-size:12.5px;line-height:12.5px;color:#217346;font-weight:normal;">1</div>
<div class="t" style="left:-1.0px;width:22px;text-align:center;top:235.02px;font-size:12.5px;line-height:12.5px;color:#217346;font-weight:normal;">2</div>
<div class="t" style="left:-1.0px;width:22px;text-align:center;top:255.02px;font-size:12.5px;line-height:12.5px;color:#217346;font-weight:normal;">3</div>
<div class="t" style="left:-1.0px;width:22px;text-align:center;top:275.02px;font-size:12.5px;line-height:12.5px;color:#217346;font-weight:normal;">4</div>
<div class="t" style="left:-1.0px;width:22px;text-align:center;top:295.02px;font-size:12.5px;line-height:12.5px;color:#217346;font-weight:normal;">5</div>
<div class="t" style="left:-1.0px;width:22px;text-align:center;top:315.02px;font-size:12.5px;line-height:12.5px;color:#217346;font-weight:normal;">6</div>
<div class="t" style="left:-1.0px;width:22px;text-align:center;top:335.02px;font-size:12.5px;line-height:12.5px;color:#217346;font-weight:normal;">7</div>
<div class="t" style="left:-1.0px;width:22px;text-align:center;top:355.02px;font-size:12.5px;line-height:12.5px;color:#217346;font-weight:normal;">8</div>
<div class="t" style="left:-1.0px;width:22px;text-align:center;top:375.02px;font-size:12.5px;line-height:12.5px;color:#217346;font-weight:normal;">9</div>
<div class="t" style="left:-1.0px;width:22px;text-align:center;top:395.02px;font-size:12.5px;line-height:12.5px;color:#217346;font-weight:normal;">10</div>
<div class="t" style="left:-1.0px;width:22px;text-align:center;top:415.02px;font-size:12.5px;line-height:12.5px;color:#217346;font-weight:normal;">11</div>
<div class="t" style="left:-1.0px;width:22px;text-align:center;top:435.02px;font-size:12.5px;line-height:12.5px;color:#262626;font-weight:normal;">12</div>
<div class="t" style="left:-1.0px;width:22px;text-align:center;top:455.02px;font-size:12.5px;line-height:12.5px;color:#262626;font-weight:normal;">13</div>
<div class="t" style="left:-1.0px;width:22px;text-align:center;top:475.02px;font-size:12.5px;line-height:12.5px;color:#262626;font-weight:normal;">14</div>
<div class="t" style="left:-1.0px;width:22px;text-align:center;top:495.02px;font-size:12.5px;line-height:12.5px;color:#262626;font-weight:normal;">15</div>
<div class="t" style="left:-1.0px;width:22px;text-align:center;top:515.02px;font-size:12.5px;line-height:12.5px;color:#262626;font-weight:normal;">16</div>
<div class="t" style="left:-1.0px;width:22px;text-align:center;top:535.02px;font-size:12.5px;line-height:12.5px;color:#262626;font-weight:normal;">17</div>
<div class="t" style="left:-1.0px;width:22px;text-align:center;top:555.02px;font-size:12.5px;line-height:12.5px;color:#262626;font-weight:normal;">18</div>
<div class="t" style="left:-1.0px;width:22px;text-align:center;top:575.02px;font-size:12.5px;line-height:12.5px;color:#262626;font-weight:normal;">19</div>
<div class="t" style="left:-1.0px;width:22px;text-align:center;top:595.02px;font-size:12.5px;line-height:12.5px;color:#262626;font-weight:normal;">20</div>
<div class="t" style="left:-1.0px;width:22px;text-align:center;top:615.02px;font-size:12.5px;line-height:12.5px;color:#262626;font-weight:normal;">21</div>
<div class="t" style="left:-1.0px;width:22px;text-align:center;top:635.02px;font-size:12.5px;line-height:12.5px;color:#262626;font-weight:normal;">22</div>
<svg class="s" style="left:0px;top:176px" width="22" height="19" viewBox="0 0 22 19"><path d="M7 16 L19 16 L19 4 Z" fill="#b4b4b4"/></svg>
<div class="r" style="left:23px;top:196px;width:501px;height:233px;background:#ffffff;"></div>
<div class="r" style="left:24px;top:197px;width:499px;height:32px;background:#c8a850;"></div>
<div class="r" style="left:24px;top:197px;width:45px;height:32px;background:#ffd966;"></div>
<div class="r" style="left:24px;top:230px;width:499px;height:19px;background:#b0b8c4;"></div>
<div class="r" style="left:24px;top:250px;width:499px;height:19px;background:#c8c8c8;"></div>
<div class="r" style="left:24px;top:270px;width:499px;height:19px;background:#b0b8c4;"></div>
<div class="r" style="left:24px;top:290px;width:499px;height:19px;background:#c8c8c8;"></div>
<div class="r" style="left:24px;top:310px;width:499px;height:19px;background:#b0b8c4;"></div>
<div class="r" style="left:24px;top:330px;width:499px;height:19px;background:#c8c8c8;"></div>
<div class="r" style="left:24px;top:350px;width:499px;height:19px;background:#b0b8c4;"></div>
<div class="r" style="left:24px;top:370px;width:499px;height:19px;background:#c8c8c8;"></div>
<div class="r" style="left:24px;top:390px;width:499px;height:19px;background:#b0b8c4;"></div>
<div class="r" style="left:24px;top:410px;width:499px;height:18px;background:#c8c8c8;"></div>
<div class="r" style="left:69px;top:197px;width:1px;height:231px;background:#000;"></div>
<div class="r" style="left:136px;top:197px;width:1px;height:231px;background:#000;"></div>
<div class="r" style="left:235px;top:197px;width:1px;height:231px;background:#000;"></div>
<div class="r" style="left:329px;top:197px;width:1px;height:231px;background:#000;"></div>
<div class="r" style="left:423px;top:197px;width:1px;height:231px;background:#000;"></div>
<div class="r" style="left:24px;top:229px;width:499px;height:1px;background:#000;"></div>
<div class="r" style="left:24px;top:249px;width:499px;height:1px;background:#000;"></div>
<div class="r" style="left:24px;top:269px;width:499px;height:1px;background:#000;"></div>
<div class="r" style="left:24px;top:289px;width:499px;height:1px;background:#000;"></div>
<div class="r" style="left:24px;top:309px;width:499px;height:1px;background:#000;"></div>
<div class="r" style="left:24px;top:329px;width:499px;height:1px;background:#000;"></div>
<div class="r" style="left:24px;top:349px;width:499px;height:1px;background:#000;"></div>
<div class="r" style="left:24px;top:369px;width:499px;height:1px;background:#000;"></div>
<div class="r" style="left:24px;top:389px;width:499px;height:1px;background:#000;"></div>
<div class="r" style="left:24px;top:409px;width:499px;height:1px;background:#000;"></div>
<div class="r" style="left:21px;top:194px;width:501px;height:233px;border:2px solid #217346;"></div>
<div class="r" style="left:520px;top:425px;width:8px;height:8px;background:#ffffff;"></div>
<div class="r" style="left:522px;top:427px;width:5px;height:5px;background:#217346;"></div>
<div class="t" style="left:-14.5px;width:120px;text-align:center;top:205.74px;font-size:13.3px;line-height:13.3px;color:#000;font-weight:bold;letter-spacing:-0.45px;">STT</div>
<div class="t" style="left:42.5px;width:120px;text-align:center;top:205.74px;font-size:13.3px;line-height:13.3px;color:#000;font-weight:bold;letter-spacing:-0.45px;">MÃ</div>
<div class="t" style="left:125.5px;width:120px;text-align:center;top:205.74px;font-size:13.3px;line-height:13.3px;color:#000;font-weight:bold;letter-spacing:-0.45px;">SẢN PHẢM</div>
<div class="t" style="left:222.0px;width:120px;text-align:center;top:205.74px;font-size:13.3px;line-height:13.3px;color:#000;font-weight:bold;letter-spacing:-0.45px;">LOẠI HÀNG</div>
<div class="t" style="left:316.0px;width:120px;text-align:center;top:205.74px;font-size:13.3px;line-height:13.3px;color:#000;font-weight:bold;letter-spacing:-0.45px;">SỐ LƯỢNG</div>
<div class="t" style="left:413.5px;width:120px;text-align:center;top:205.74px;font-size:13.3px;line-height:13.3px;color:#000;font-weight:bold;letter-spacing:-0.45px;">TIỀN HÀNG</div>
<div class="r" style="left:52px;top:211px;width:15px;height:15px;background:linear-gradient(#ffffff,#f2f2f2);border:1px solid #a8abb2;"></div>
<svg class="s" style="left:52px;top:211px" width="17" height="17" viewBox="0 0 17 17"><path d="M4.8 7 L12.2 7 L8.5 11 Z" fill="#595959"/></svg>
<div class="r" style="left:119px;top:211px;width:15px;height:15px;background:linear-gradient(#d0d0d0,#c4c4c4);border:1px solid #a8abb2;"></div>
<svg class="s" style="left:119px;top:211px" width="17" height="17" viewBox="0 0 17 17"><path d="M4.8 7 L12.2 7 L8.5 11 Z" fill="#595959"/></svg>
<div class="r" style="left:218px;top:211px;width:15px;height:15px;background:linear-gradient(#d0d0d0,#c4c4c4);border:1px solid #a8abb2;"></div>
<svg class="s" style="left:218px;top:211px" width="17" height="17" viewBox="0 0 17 17"><path d="M4.8 7 L12.2 7 L8.5 11 Z" fill="#595959"/></svg>
<div class="r" style="left:312px;top:211px;width:15px;height:15px;background:linear-gradient(#d0d0d0,#c4c4c4);border:1px solid #a8abb2;"></div>
<svg class="s" style="left:312px;top:211px" width="17" height="17" viewBox="0 0 17 17"><path d="M4.8 7 L12.2 7 L8.5 11 Z" fill="#595959"/></svg>
<div class="r" style="left:406px;top:211px;width:15px;height:15px;background:linear-gradient(#d0d0d0,#c4c4c4);border:1px solid #a8abb2;"></div>
<svg class="s" style="left:406px;top:211px" width="17" height="17" viewBox="0 0 17 17"><path d="M4.8 7 L12.2 7 L8.5 11 Z" fill="#595959"/></svg>
<div class="r" style="left:507px;top:211px;width:15px;height:15px;background:linear-gradient(#d0d0d0,#c4c4c4);border:1px solid #a8abb2;border-right:none;"></div>
<svg class="s" style="left:507px;top:211px" width="17" height="17" viewBox="0 0 17 17"><path d="M4.8 7 L12.2 7 L8.5 11 Z" fill="#595959"/></svg>
<div class="t" style="left:25.5px;width:40px;text-align:center;top:232.94px;font-size:13.3px;line-height:13.3px;color:#000;font-weight:normal;letter-spacing:-0.4px;">1</div>
<div class="t" style="left:72px;top:232.94px;font-size:13.3px;line-height:13.3px;color:#000;font-weight:normal;letter-spacing:-0.4px;">VT10001</div>
<div class="t" style="left:138.5px;top:232.94px;font-size:13.3px;line-height:13.3px;color:#000;font-weight:normal;letter-spacing:0px;">Đá hộc</div>
<div class="t" style="left:242.0px;width:80px;text-align:center;top:232.94px;font-size:13.3px;line-height:13.3px;color:#000;font-weight:normal;letter-spacing:0px;">Đá</div>
<div class="t" style="left:331.5px;width:90px;text-align:right;top:232.94px;font-size:13.3px;line-height:13.3px;color:#000;font-weight:normal;letter-spacing:-0.4px;">1<span style="letter-spacing:0.35px">.</span>054<span style="letter-spacing:0.35px">,</span>06</div>
<div class="t" style="left:422.5px;width:100px;text-align:right;top:232.94px;font-size:13.3px;line-height:13.3px;color:#000;font-weight:normal;letter-spacing:-0.4px;">124<span style="letter-spacing:0.35px">.</span>570<span style="letter-spacing:0.35px">.</span>727</div>
<div class="t" style="left:25.5px;width:40px;text-align:center;top:252.94px;font-size:13.3px;line-height:13.3px;color:#000;font-weight:normal;letter-spacing:-0.4px;">2</div>
<div class="t" style="left:72px;top:252.94px;font-size:13.3px;line-height:13.3px;color:#000;font-weight:normal;letter-spacing:-0.4px;">VT10002</div>
<div class="t" style="left:138.5px;top:252.94px;font-size:13.3px;line-height:13.3px;color:#000;font-weight:normal;letter-spacing:0px;">Đá 0x4</div>
<div class="t" style="left:242.0px;width:80px;text-align:center;top:252.94px;font-size:13.3px;line-height:13.3px;color:#000;font-weight:normal;letter-spacing:0px;">Bột đá</div>
<div class="t" style="left:331.5px;width:90px;text-align:right;top:252.94px;font-size:13.3px;line-height:13.3px;color:#000;font-weight:normal;letter-spacing:-0.4px;">88<span style="letter-spacing:0.35px">.</span>220<span style="letter-spacing:0.35px">,</span>06</div>
<div class="t" style="left:422.5px;width:100px;text-align:right;top:252.94px;font-size:13.3px;line-height:13.3px;color:#000;font-weight:normal;letter-spacing:-0.4px;">9<span style="letter-spacing:0.35px">.</span>154<span style="letter-spacing:0.35px">.</span>583<span style="letter-spacing:0.35px">.</span>427</div>
<div class="t" style="left:25.5px;width:40px;text-align:center;top:272.94px;font-size:13.3px;line-height:13.3px;color:#000;font-weight:normal;letter-spacing:-0.4px;">3</div>
<div class="t" style="left:72px;top:272.94px;font-size:13.3px;line-height:13.3px;color:#000;font-weight:normal;letter-spacing:-0.4px;">VT10005</div>
<div class="t" style="left:138.5px;top:272.94px;font-size:13.3px;line-height:13.3px;color:#000;font-weight:normal;letter-spacing:0px;">Đá 4x6</div>
<div class="t" style="left:242.0px;width:80px;text-align:center;top:272.94px;font-size:13.3px;line-height:13.3px;color:#000;font-weight:normal;letter-spacing:0px;">Đá</div>
<div class="t" style="left:331.5px;width:90px;text-align:right;top:272.94px;font-size:13.3px;line-height:13.3px;color:#000;font-weight:normal;letter-spacing:-0.4px;">67<span style="letter-spacing:0.35px">.</span>254<span style="letter-spacing:0.35px">,</span>62</div>
<div class="t" style="left:422.5px;width:100px;text-align:right;top:272.94px;font-size:13.3px;line-height:13.3px;color:#000;font-weight:normal;letter-spacing:-0.4px;">10<span style="letter-spacing:0.35px">.</span>108<span style="letter-spacing:0.35px">.</span>538<span style="letter-spacing:0.35px">.</span>112</div>
<div class="t" style="left:25.5px;width:40px;text-align:center;top:292.94px;font-size:13.3px;line-height:13.3px;color:#000;font-weight:normal;letter-spacing:-0.4px;">4</div>
<div class="t" style="left:72px;top:292.94px;font-size:13.3px;line-height:13.3px;color:#000;font-weight:normal;letter-spacing:-0.4px;">VT10006</div>
<div class="t" style="left:138.5px;top:292.94px;font-size:13.3px;line-height:13.3px;color:#000;font-weight:normal;letter-spacing:0px;">Đá 5x20 ly tâm</div>
<div class="t" style="left:242.0px;width:80px;text-align:center;top:292.94px;font-size:13.3px;line-height:13.3px;color:#000;font-weight:normal;letter-spacing:0px;">Đá</div>
<div class="t" style="left:331.5px;width:90px;text-align:right;top:292.94px;font-size:13.3px;line-height:13.3px;color:#000;font-weight:normal;letter-spacing:-0.4px;">142<span style="letter-spacing:0.35px">,</span>97</div>
<div class="t" style="left:422.5px;width:100px;text-align:right;top:292.94px;font-size:13.3px;line-height:13.3px;color:#000;font-weight:normal;letter-spacing:-0.4px;">32<span style="letter-spacing:0.35px">.</span>493<span style="letter-spacing:0.35px">.</span>181</div>
<div class="t" style="left:25.5px;width:40px;text-align:center;top:312.94px;font-size:13.3px;line-height:13.3px;color:#000;font-weight:normal;letter-spacing:-0.4px;">5</div>
<div class="t" style="left:72px;top:312.94px;font-size:13.3px;line-height:13.3px;color:#000;font-weight:normal;letter-spacing:-0.4px;">VT10007</div>
<div class="t" style="left:138.5px;top:312.94px;font-size:13.3px;line-height:13.3px;color:#000;font-weight:normal;letter-spacing:0px;">Đá mi bụi</div>
<div class="t" style="left:242.0px;width:80px;text-align:center;top:312.94px;font-size:13.3px;line-height:13.3px;color:#000;font-weight:normal;letter-spacing:0px;">Bột đá</div>
<div class="t" style="left:331.5px;width:90px;text-align:right;top:312.94px;font-size:13.3px;line-height:13.3px;color:#000;font-weight:normal;letter-spacing:-0.4px;">49<span style="letter-spacing:0.35px">.</span>951<span style="letter-spacing:0.35px">,</span>39</div>
<div class="t" style="left:422.5px;width:100px;text-align:right;top:312.94px;font-size:13.3px;line-height:13.3px;color:#000;font-weight:normal;letter-spacing:-0.4px;">5<span style="letter-spacing:0.35px">.</span>036<span style="letter-spacing:0.35px">.</span>227<span style="letter-spacing:0.35px">.</span>924</div>
<div class="t" style="left:25.5px;width:40px;text-align:center;top:332.94px;font-size:13.3px;line-height:13.3px;color:#000;font-weight:normal;letter-spacing:-0.4px;">6</div>
<div class="t" style="left:72px;top:332.94px;font-size:13.3px;line-height:13.3px;color:#000;font-weight:normal;letter-spacing:-0.4px;">VT10008</div>
<div class="t" style="left:138.5px;top:332.94px;font-size:13.3px;line-height:13.3px;color:#000;font-weight:normal;letter-spacing:0px;">Đá mi sàng</div>
<div class="t" style="left:242.0px;width:80px;text-align:center;top:332.94px;font-size:13.3px;line-height:13.3px;color:#000;font-weight:normal;letter-spacing:0px;">Bột đá</div>
<div class="t" style="left:331.5px;width:90px;text-align:right;top:332.94px;font-size:13.3px;line-height:13.3px;color:#000;font-weight:normal;letter-spacing:-0.4px;">5<span style="letter-spacing:0.35px">.</span>806<span style="letter-spacing:0.35px">,</span>60</div>
<div class="t" style="left:422.5px;width:100px;text-align:right;top:332.94px;font-size:13.3px;line-height:13.3px;color:#000;font-weight:normal;letter-spacing:-0.4px;">824<span style="letter-spacing:0.35px">.</span>366<span style="letter-spacing:0.35px">.</span>694</div>
<div class="t" style="left:25.5px;width:40px;text-align:center;top:352.94px;font-size:13.3px;line-height:13.3px;color:#000;font-weight:normal;letter-spacing:-0.4px;">7</div>
<div class="t" style="left:72px;top:352.94px;font-size:13.3px;line-height:13.3px;color:#000;font-weight:normal;letter-spacing:-0.4px;">VT10015</div>
<div class="t" style="left:138.5px;top:352.94px;font-size:13.3px;line-height:13.3px;color:#000;font-weight:normal;letter-spacing:0px;">Đá vệ sinh</div>
<div class="t" style="left:242.0px;width:80px;text-align:center;top:352.94px;font-size:13.3px;line-height:13.3px;color:#000;font-weight:normal;letter-spacing:0px;">Đá</div>
<div class="t" style="left:331.5px;width:90px;text-align:right;top:352.94px;font-size:13.3px;line-height:13.3px;color:#000;font-weight:normal;letter-spacing:-0.4px;">1<span style="letter-spacing:0.35px">.</span>360<span style="letter-spacing:0.35px">,</span>60</div>
<div class="t" style="left:422.5px;width:100px;text-align:right;top:352.94px;font-size:13.3px;line-height:13.3px;color:#000;font-weight:normal;letter-spacing:-0.4px;">86<span style="letter-spacing:0.35px">.</span>583<span style="letter-spacing:0.35px">.</span>639</div>
<div class="t" style="left:25.5px;width:40px;text-align:center;top:372.94px;font-size:13.3px;line-height:13.3px;color:#000;font-weight:normal;letter-spacing:-0.4px;">8</div>
<div class="t" style="left:72px;top:372.94px;font-size:13.3px;line-height:13.3px;color:#000;font-weight:normal;letter-spacing:-0.4px;">VT10373</div>
<div class="t" style="left:138.5px;top:372.94px;font-size:13.3px;line-height:13.3px;color:#000;font-weight:normal;letter-spacing:0px;">Đá 2x4</div>
<div class="t" style="left:242.0px;width:80px;text-align:center;top:372.94px;font-size:13.3px;line-height:13.3px;color:#000;font-weight:normal;letter-spacing:0px;">Đá</div>
<div class="t" style="left:331.5px;width:90px;text-align:right;top:372.94px;font-size:13.3px;line-height:13.3px;color:#000;font-weight:normal;letter-spacing:-0.4px;">41<span style="letter-spacing:0.35px">,</span>72</div>
<div class="t" style="left:422.5px;width:100px;text-align:right;top:372.94px;font-size:13.3px;line-height:13.3px;color:#000;font-weight:normal;letter-spacing:-0.4px;">7<span style="letter-spacing:0.35px">.</span>206<span style="letter-spacing:0.35px">.</span>182</div>
<div class="t" style="left:25.5px;width:40px;text-align:center;top:392.94px;font-size:13.3px;line-height:13.3px;color:#000;font-weight:normal;letter-spacing:-0.4px;">9</div>
<div class="t" style="left:72px;top:392.94px;font-size:13.3px;line-height:13.3px;color:#000;font-weight:normal;letter-spacing:-0.4px;">VT10376</div>
<div class="t" style="left:138.5px;top:392.94px;font-size:13.3px;line-height:13.3px;color:#000;font-weight:normal;letter-spacing:0px;">Đất san lấp</div>
<div class="t" style="left:242.0px;width:80px;text-align:center;top:392.94px;font-size:13.3px;line-height:13.3px;color:#000;font-weight:normal;letter-spacing:0px;">Đất</div>
<div class="t" style="left:331.5px;width:90px;text-align:right;top:392.94px;font-size:13.3px;line-height:13.3px;color:#000;font-weight:normal;letter-spacing:-0.4px;">21<span style="letter-spacing:0.35px">.</span>069<span style="letter-spacing:0.35px">,</span>80</div>
<div class="t" style="left:422.5px;width:100px;text-align:right;top:392.94px;font-size:13.3px;line-height:13.3px;color:#000;font-weight:normal;letter-spacing:-0.4px;">599<span style="letter-spacing:0.35px">.</span>214<span style="letter-spacing:0.35px">.</span>839</div>
<div class="t" style="left:25.5px;width:40px;text-align:center;top:412.94px;font-size:13.3px;line-height:13.3px;color:#000;font-weight:normal;letter-spacing:-0.4px;">10</div>
<div class="t" style="left:72px;top:412.94px;font-size:13.3px;line-height:13.3px;color:#000;font-weight:normal;letter-spacing:-0.4px;">VT10377</div>
<div class="t" style="left:138.5px;top:412.94px;font-size:13.3px;line-height:13.3px;color:#000;font-weight:normal;letter-spacing:0px;">Đá 0x25</div>
<div class="t" style="left:242.0px;width:80px;text-align:center;top:412.94px;font-size:13.3px;line-height:13.3px;color:#000;font-weight:normal;letter-spacing:0px;">Bột đá</div>
<div class="t" style="left:331.5px;width:90px;text-align:right;top:412.94px;font-size:13.3px;line-height:13.3px;color:#000;font-weight:normal;letter-spacing:-0.4px;">11<span style="letter-spacing:0.35px">,</span>10</div>
<div class="t" style="left:422.5px;width:100px;text-align:right;top:412.94px;font-size:13.3px;line-height:13.3px;color:#000;font-weight:normal;letter-spacing:-0.4px;">1<span style="letter-spacing:0.35px">.</span>412<span style="letter-spacing:0.35px">.</span>727</div>
</body></html>
